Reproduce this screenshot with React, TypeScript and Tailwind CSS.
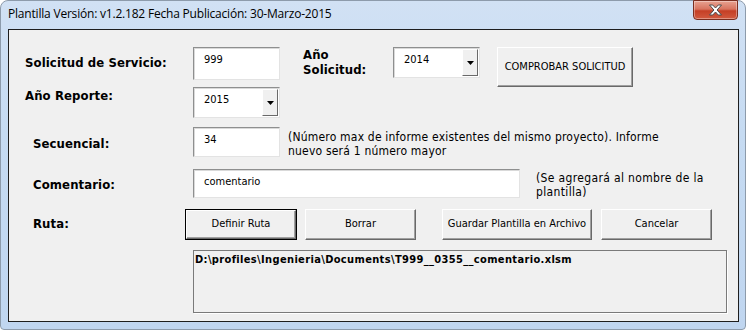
import type { ReactNode } from "react";

const ui = "font-['DejaVu_Sans_Condensed','DejaVu_Sans',sans-serif] text-black";

function TextBox({ value, className }: { value: string; className: string }) {
  return (
    <div
      className={`shrink-0 bg-white border border-t-[#8e8f8f] border-l-[#8e8f8f] border-r-[#e3e3e3] border-b-[#e3e3e3] shadow-[inset_1px_1px_0_#d9d9d9] ${className}`}
    >
      <span className="block pl-[10px] pt-[5px] text-[11px] leading-[13px]">{value}</span>
    </div>
  );
}

function Combo({ value }: { value: string }) {
  return (
    <div className="shrink-0 w-[87px] h-[31px] flex bg-white border border-t-[#8e8f8f] border-l-[#8e8f8f] border-r-[#e3e3e3] border-b-[#e3e3e3] shadow-[inset_1px_1px_0_#d9d9d9]">
      <span className="flex-1 pl-[10px] pt-[5px] text-[11px] leading-[13px]">{value}</span>
      <div className="w-[16px] my-[1px] mr-[1px] bg-[#f0f0f0] border border-t-white border-l-white border-r-[#696969] border-b-[#696969] flex items-center justify-center">
        <svg width="7" height="4" viewBox="0 0 7 4">
          <path d="M0 0h7L3.5 4z" fill="#000" />
        </svg>
      </div>
    </div>
  );
}

function Button({
  children,
  className,
  isDefault,
}: {
  children: ReactNode;
  className: string;
  isDefault?: boolean;
}) {
  return (
    <div className={`shrink-0 ${isDefault ? "border border-black" : ""} ${className}`}>
      <div className="w-full h-full bg-[#f0f0f0] border border-t-white border-l-white border-r-[#696969] border-b-[#696969] shadow-[inset_-1px_-1px_0_#a0a0a0] flex items-center justify-center text-[11px]">
        {children}
      </div>
    </div>
  );
}

export default function App() {
  return (
    <div className="w-[746px] h-[330px] overflow-hidden bg-white">
      <div className="w-[746px] h-[330px] rounded-t-[8px] rounded-b-[4px] border border-[#8d9bab] bg-[linear-gradient(180deg,#d1e1f4_0%,#c6dbf2_40%,#c0d6f0_100%)] flex flex-col">
        {/* title bar */}
        <div className="h-[28px] shrink-0 flex items-start justify-between">
          <span className="pl-[7px] pt-[5px] text-[12px] leading-[16px] font-['Open_Sans',sans-serif] text-black tracking-[-0.2px]">
            Plantilla Versión: v1.2.182 Fecha Publicación: 30-Marzo-2015
          </span>
          <div className="mr-[7px] mt-[-1px] w-[45px] h-[20px] rounded-b-[4px] border border-[#7a2e20] bg-[linear-gradient(180deg,#e8a291_0%,#d8745f_45%,#c53f25_55%,#d25a3f_100%)] flex items-center justify-center shadow-[inset_0_0_0_1px_rgba(255,255,255,0.35)]">
            <svg width="15" height="12" viewBox="0 0 15 12">
              <path
                d="M1.5 1h3.2l2.8 3 2.8-3h3.2l-4.4 5 4.4 5h-3.2l-2.8-3-2.8 3H1.5l4.4-5z"
                fill="#fff"
                stroke="#4a4a4a"
                strokeWidth="1"
                strokeLinejoin="round"
              />
            </svg>
          </div>
        </div>

        {/* client area */}
        <div className={`ml-[7px] w-[731px] h-[293px] shrink-0 border border-[#1e1e1e] bg-[#f0f0f0] flex flex-col ${ui}`}>
          <div className="flex items-start mt-[17px]">
            <div className="ml-[16px] w-[168px] mt-[8px] text-[13px] leading-[16px] font-bold tracking-[0.1px]">
              Solicitud de Servicio:
            </div>
            <TextBox value="999" className="w-[87px] h-[33px]" />
            <div className="ml-[23px] w-[90px] text-[13px] leading-[15px] font-bold tracking-[0.1px]">
              Año
              <br />
              Solicitud:
            </div>
            <Combo value="2014" />
            <Button className="ml-[17px] w-[136px] h-[40px]">COMPROBAR SOLICITUD</Button>
          </div>

          <div className="flex items-start">
            <div className="ml-[16px] w-[168px] mt-[1px] text-[13px] leading-[16px] font-bold tracking-[0.1px]">
              Año Reporte:
            </div>
            <Combo value="2015" />
          </div>

          <div className="flex items-start mt-[9px]">
            <div className="ml-[24px] w-[160px] mt-[9px] text-[13px] leading-[16px] font-bold tracking-[0.1px]">
              Secuencial:
            </div>
            <TextBox value="34" className="w-[87px] h-[30px]" />
            <div className="ml-[8px] mt-[3px] text-[12px] leading-[14px] tracking-[0.2px]">
              (Número max de informe existentes del mismo proyecto). Informe
              <br />
              nuevo será 1 número mayor
            </div>
          </div>

          <div className="flex items-start mt-[11px]">
            <div className="ml-[24px] w-[160px] mt-[8px] text-[13px] leading-[16px] font-bold tracking-[0.1px]">
              Comentario:
            </div>
            <TextBox value="comentario" className="w-[327px] h-[29px]" />
            <div className="ml-[16px] mt-[2px] text-[12px] leading-[14px] tracking-[0.35px]">
              (Se agregará al nombre de la
              <br />
              plantilla)
            </div>
          </div>

          <div className="flex items-start mt-[10px]">
            <div className="ml-[24px] w-[152px] mt-[7px] text-[13px] leading-[16px] font-bold tracking-[0.1px]">
              Ruta:
            </div>
            <Button isDefault className="w-[112px] h-[31px]">Definir Ruta</Button>
            <Button className="ml-[8px] w-[111px] h-[31px]">Borrar</Button>
            <Button className="ml-[26px] w-[150px] h-[31px]">Guardar Plantilla en Archivo</Button>
            <Button className="ml-[9px] w-[111px] h-[31px]">Cancelar</Button>
          </div>

          <div className="ml-[184px] mt-[10px] w-[534px] h-[63px] border border-[#7a7a7a] shadow-[1px_1px_0_#fff]">
            <span className="block pl-[1px] pt-[2px] text-[11px] leading-[13px] font-bold tracking-[0.35px]">
              D:\profiles\Ingenieria\Documents\T999__0355__comentario.xlsm
            </span>
          </div>
        </div>
      </div>
    </div>
  );
}
